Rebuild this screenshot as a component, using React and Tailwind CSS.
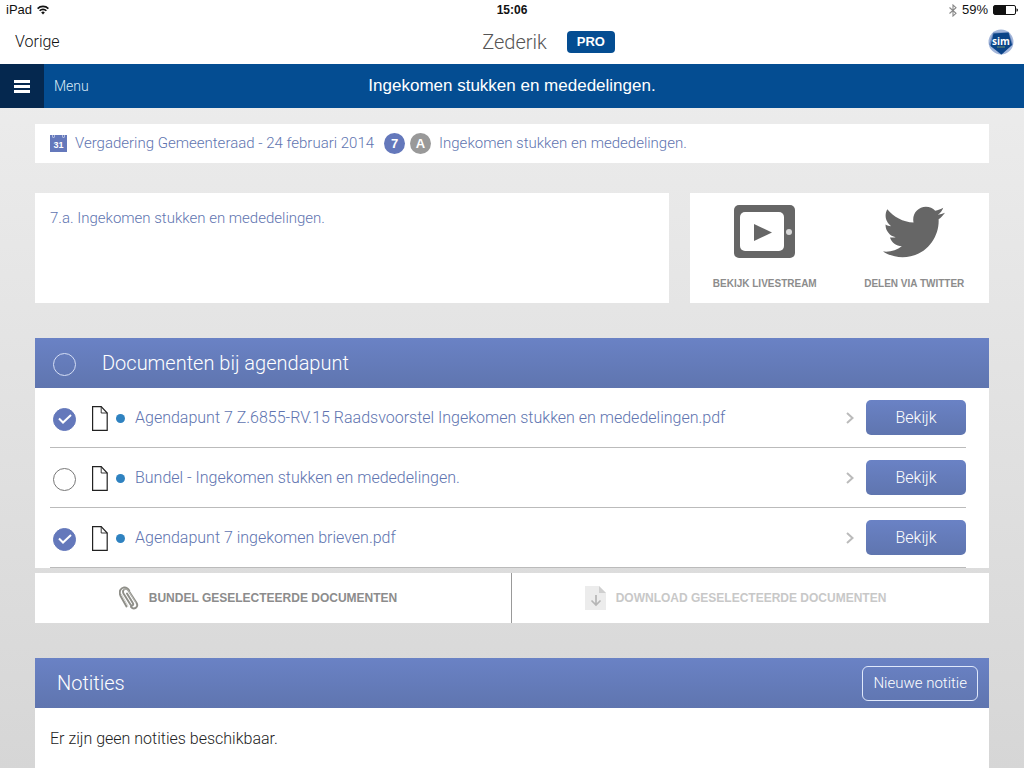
import { useState } from "react";
import { FaTwitter } from "react-icons/fa";

const DOCUMENTS = [
  { id: 1, title: "Agendapunt 7 Z.6855-RV.15 Raadsvoorstel Ingekomen stukken en mededelingen.pdf" },
  { id: 2, title: "Bundel - Ingekomen stukken en mededelingen." },
  { id: 3, title: "Agendapunt 7 ingekomen brieven.pdf" },
];

function WifiIcon() {
  return (
    <svg viewBox="0 0 12 10" className="h-[10px] w-3" fill="none" stroke="#111" strokeWidth="1.6">
      <path d="M0.6 3.6a7.6 7.6 0 0 1 10.8 0" />
      <path d="M2.6 5.8a4.8 4.8 0 0 1 6.8 0" />
      <path d="M6 9.4 4.2 7.5a2.5 2.5 0 0 1 3.6 0z" fill="#111" stroke="none" />
    </svg>
  );
}

function BluetoothIcon() {
  return (
    <svg viewBox="0 0 8 13" className="h-[13px] w-2" fill="none" stroke="#888" strokeWidth="1.1">
      <path d="M.5 3.500 7 9.300 4 12V1l3 2.700L.5 9.500" />
    </svg>
  );
}

function BatteryIcon() {
  return (
    <svg viewBox="0 0 25 10" className="h-[10px] w-[25px]">
      <rect x="0.5" y="0.5" width="22" height="9" rx="1.5" fill="#fff" stroke="#111" />
      <rect x="1" y="1" width="12" height="8" fill="#111" />
      <path d="M23.5 3.2q1.5.4 1.5 1.8t-1.5 1.8z" fill="#111" />
    </svg>
  );
}

function SimLogo() {
  return (
    <svg viewBox="0 0 26 26" className="h-[26px] w-[26px]" role="img" aria-label="sim">
      <circle cx="13" cy="13" r="12.5" fill="#a3b6da" />
      <path d="M5 3.500h16l4 12-12 10L1 15.500z" fill="#6f8cc0" />
      <path d="M5.500 4.500 20.500 3.500 24 16 13.500 25.500 2.500 17z" fill="#0b4488" />
      <text
        x="13"
        y="16"
        textAnchor="middle"
        fontSize="10"
        fontWeight="bold"
        fontFamily="Open Sans, sans-serif"
        fill="#fff"
      >
        sim
      </text>
      <path d="M9 18h8" stroke="#8aa66a" strokeWidth="0.8" />
    </svg>
  );
}

function CalendarIcon() {
  return (
    <svg viewBox="0 0 17 17" className="h-[17px] w-[17px] shrink-0">
      <path d="M0 0h2.500v2.500h2V0h8v2.500h2V0H17v17H0z" fill="#6478bb" />
      <path d="M3 0h1v2H3zM13 0h1v2h-1z" fill="#6478bb" />
      <text
        x="8.5"
        y="12.5"
        textAnchor="middle"
        fontSize="9"
        fontWeight="bold"
        fontFamily="Liberation Sans, sans-serif"
        fill="#fff"
      >
        31
      </text>
    </svg>
  );
}

function LivestreamIcon() {
  return (
    <svg viewBox="0 0 61 53" className="h-[53px] w-[61px]">
      <rect width="61" height="53" rx="5" fill="#666" />
      <rect x="6" y="7" width="44" height="39" rx="5" fill="#fff" />
      <path d="M20 19v17l18-8.500z" fill="#666" />
      <circle cx="55" cy="27" r="3" fill="#d8d8d8" />
    </svg>
  );
}

function FileIcon() {
  return (
    <svg viewBox="0 0 16 25" className="h-[25px] w-4 shrink-0" fill="none" stroke="#222" strokeWidth="1.2">
      <path d="M.6.6h8.600l6 6.400v17.400H.6z" />
      <path d="M9.200.6v6.400h6" strokeWidth="0.9" />
    </svg>
  );
}

function PaperclipIcon() {
  return (
    <svg viewBox="0 0 20 24" className="h-6 w-5" fill="none" strokeLinecap="round">
      <path
        d="M8 7.500 13.800 17c1.300 2.200-1.100 3.600-2.400 1.500L4.500 7.500C2.500 3.500 7.300 1 9.800 5L17.600 17c2.300 4.300-2.800 7.300-5.600 3.800M7.500 20.500 1.600 10C-.4 5.500 1.500 2 5 1.400c2.500-.3 4 1 5.200 3"
        stroke="#8e8e88"
        strokeWidth="1.900"
      />
      <path d="M4.800 3.300c2.300-1 3.800.2 4.900 1.900l7 11.500M2.300 8 9 20" stroke="#c4c4be" strokeWidth="0.800" />
    </svg>
  );
}

function DownloadIcon() {
  return (
    <svg viewBox="0 0 21 24" className="h-6 w-[21px]" fill="none">
      <path d="M0 0h14l7 7v17H0z" fill="#ececec" />
      <path d="M14 0l7 7h-7z" fill="#cfcfcf" />
      <path d="M11 9v10M6.500 14.500 11 19l4.500-4.500" stroke="#b5b5b5" strokeWidth="1.700" />
    </svg>
  );
}

function RoundCheckbox({ checked, onChange, light, labelledBy }) {
  return (
    <span className="grid shrink-0 place-items-center pt-[3px]">
      <input
        type="checkbox"
        aria-labelledby={labelledBy}
        checked={checked}
        onChange={onChange}
        className={`col-start-1 row-start-1 h-[23px] w-[23px] appearance-none rounded-full border checked:border-[#6478bb] checked:bg-[#6478bb] ${
          light ? "border-[#d5def5]" : "border-[#777]"
        }`}
      />
      {checked && (
        <svg
          viewBox="0 0 14 10"
          className="pointer-events-none col-start-1 row-start-1 h-[10px] w-[14px]"
          fill="none"
          stroke="#fff"
          strokeWidth="2"
        >
          <path d="M1 4.500 5 8.500 13 1" />
        </svg>
      )}
    </span>
  );
}

export default function App() {
  const [selected, setSelected] = useState([1, 3]);

  const toggle = (id) => {
    setSelected((ids) => (ids.includes(id) ? ids.filter((item) => item !== id) : [...ids, id]));
  };

  const allSelected = selected.length === DOCUMENTS.length;
  const toggleAll = () => setSelected(allSelected ? [] : DOCUMENTS.map((doc) => doc.id));

  return (
    <div className="flex min-h-screen flex-col bg-linear-to-b from-[#efefef] to-[#d6d6d6] font-[Roboto,Arial,sans-serif] text-base font-light text-[#6074b0]">
      <header className="bg-white">
        <div className="grid h-5 grid-cols-[1fr_auto_1fr] items-center px-[6px] font-['Liberation_Sans',Arial,sans-serif] text-[13px] font-normal text-[#111]">
          <div className="flex items-center gap-[5px]">
            iPad
            <WifiIcon />
          </div>
          <div className="text-xs font-bold">15:06</div>
          <div className="flex items-center justify-end gap-[5px]">
            <BluetoothIcon />
            59%
            <BatteryIcon />
          </div>
        </div>
        <div className="grid h-11 grid-cols-[1fr_auto_1fr] items-center pr-[10px] pl-[15px]">
          <div>
            <a href="#" className="text-[#111]">Vorige</a>
          </div>
          <h1 className="text-[20px] text-[#555]">Zederik</h1>
          <div className="flex items-center justify-between pl-5">
            <span className="rounded bg-[#044d92] px-[10px] font-['Liberation_Sans',Arial,sans-serif] text-[13px] leading-[22px] font-bold text-white">
              PRO
            </span>
            <SimLogo />
          </div>
        </div>
      </header>

      <nav className="grid h-11 grid-cols-[1fr_auto_1fr] items-center bg-[#044d92] text-white">
        <button className="flex h-11 items-center gap-[10px] text-sm text-[#dcecf8]">
          <span className="flex h-11 w-11 flex-col items-center justify-center gap-[2px] bg-[#05284f]">
            <span className="h-[3px] w-4 bg-white" />
            <span className="h-[3px] w-4 bg-white" />
            <span className="h-[3px] w-4 bg-white" />
          </span>
          Menu
        </button>
        <h2 className="font-['Liberation_Sans',Arial,sans-serif] text-[17px] font-normal">Ingekomen stukken en mededelingen.</h2>
      </nav>

      <main className="flex flex-1 flex-col px-[35px] pt-4">
        <div className="flex h-[39px] items-center bg-white px-[15px] text-[15px]">
          <CalendarIcon />
          <a href="#" className="ml-2">Vergadering Gemeenteraad - 24 februari 2014</a>
          <span className="ml-[10px] h-[21px] w-[21px] rounded-full bg-[#6478bb] text-center font-['Liberation_Sans',Arial,sans-serif] text-[13px] leading-[21px] font-bold text-white">
            7
          </span>
          <span className="ml-[5px] h-[21px] w-[21px] rounded-full bg-[#999] text-center font-['Liberation_Sans',Arial,sans-serif] text-[13px] leading-[21px] font-bold text-white">
            A
          </span>
          <a href="#" className="ml-2">Ingekomen stukken en mededelingen.</a>
        </div>

        <div className="mt-[30px] flex gap-[21px]">
          <section className="min-h-[110px] flex-1 bg-white px-[15px] py-[14px] text-[15px]">
            7.a. Ingekomen stukken en mededelingen.
          </section>
          <section className="grid w-[299px] grid-cols-2 bg-white pt-3 font-['Liberation_Sans',Arial,sans-serif] text-[10px] font-bold text-[#8c8c8c]">
            <a href="#" className="flex flex-col items-center">
              <LivestreamIcon />
              <span className="mt-[18px]">BEKIJK LIVESTREAM</span>
            </a>
            <a href="#" className="flex flex-col items-center">
              <span className="flex h-[53px] items-center">
                <FaTwitter size={62} color="#666" />
              </span>
              <span className="mt-[18px]">DELEN VIA TWITTER</span>
            </a>
          </section>
        </div>

        <section className="mt-[35px]">
          <div className="flex h-[50px] items-center gap-[26px] bg-linear-to-b from-[#6a82c5] to-[#5f75af] px-[18px] text-[20px] text-white">
            <RoundCheckbox labelledBy="documents-title" checked={allSelected} onChange={toggleAll} light />
            <h3 id="documents-title">Documenten bij agendapunt</h3>
          </div>
          <ul className="bg-white pr-[23px] pl-[15px]">
            {DOCUMENTS.map((doc) => (
              <li key={doc.id} className="flex h-[60px] items-center border-b border-[#bbb] pl-[3px]">
                <RoundCheckbox
                  labelledBy={`document-${doc.id}`}
                  checked={selected.includes(doc.id)}
                  onChange={() => toggle(doc.id)}
                />
                <a href="#" className="ml-4 flex flex-1 items-center pt-px">
                  <FileIcon />
                  <span className="ml-2 h-[9px] w-[9px] rounded-full bg-[#2f82c0]" />
                  <span id={`document-${doc.id}`} className="ml-[10px] flex-1">{doc.title}</span>
                  <svg viewBox="0 0 8 12" className="h-3 w-2" fill="none" stroke="#bbb" strokeWidth="2">
                    <path d="M1 1l5.500 5L1 11" />
                  </svg>
                </a>
                <button className="ml-3 h-[35px] w-[100px] rounded-[5px] bg-linear-to-b from-[#6a82c5] to-[#5f75af] text-white">
                  Bekijk
                </button>
              </li>
            ))}
          </ul>
          <div className="mt-[5px] grid grid-cols-2 bg-white font-['Liberation_Sans',Arial,sans-serif] text-xs font-bold">
            <button className="flex h-[50px] items-center justify-center gap-[10px] border-r border-[#999] pr-[30px] text-[#8c8c8c]">
              <PaperclipIcon />
              BUNDEL GESELECTEERDE DOCUMENTEN
            </button>
            <button className="flex h-[50px] items-center justify-center gap-[10px] pr-[30px] text-[#c8c8c8]">
              <DownloadIcon />
              DOWNLOAD GESELECTEERDE DOCUMENTEN
            </button>
          </div>
        </section>

        <section className="mt-[35px] flex flex-1 flex-col bg-white">
          <div className="flex h-[50px] items-center justify-between bg-linear-to-b from-[#6a82c5] to-[#5f75af] pr-[11px] pl-[22px] text-white">
            <h3 className="text-[20px]">Notities</h3>
            <button className="h-[35px] rounded-md border border-[#dfe8fb] px-[10px] text-[15px]">Nieuwe notitie</button>
          </div>
          <p className="px-[15px] py-[22px] leading-[18px] text-[#222]">Er zijn geen notities beschikbaar.</p>
        </section>
      </main>
    </div>
  );
}
